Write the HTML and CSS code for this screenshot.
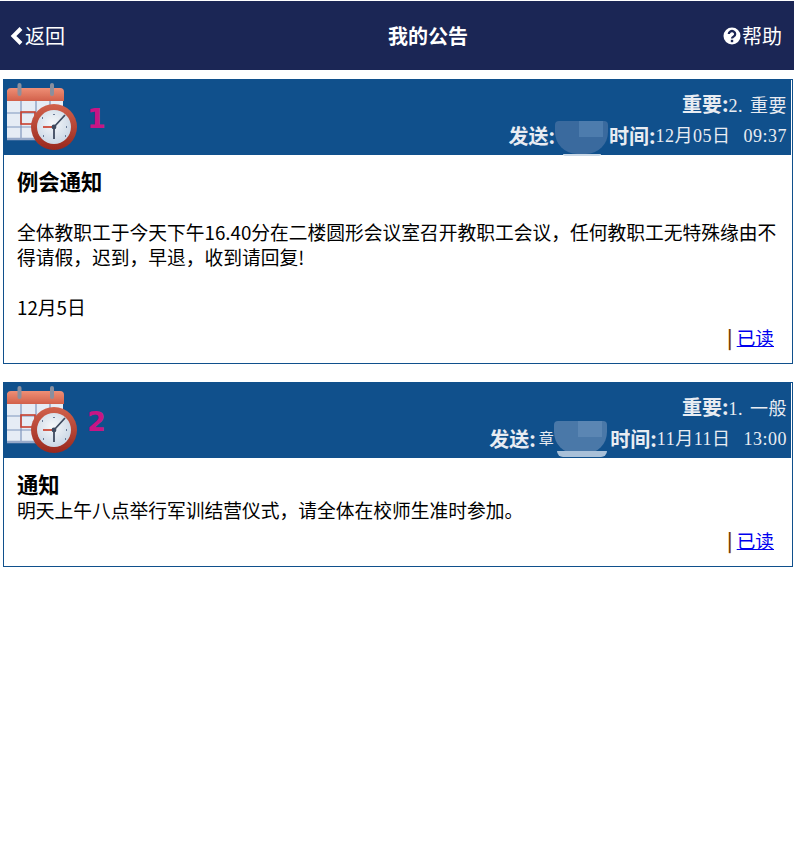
FILE: index.html
```html
<!DOCTYPE html>
<html lang="zh-CN">
<head>
    <meta charset="UTF-8">
    <meta name="viewport" content="width=device-width, initial-scale=1.0">
    <title>我的公告</title>
    <link rel="stylesheet" href="styles.css">
</head>
<body>
    <svg class="defs" width="0" height="0" aria-hidden="true">
        <defs>
            <linearGradient id="calTop" x1="0" y1="0" x2="0" y2="1">
                <stop offset="0" stop-color="#ee8f76"/>
                <stop offset="1" stop-color="#d2604a"/>
            </linearGradient>
            <radialGradient id="face" cx="0.45" cy="0.4" r="0.7">
                <stop offset="0" stop-color="#f6f8fa"/>
                <stop offset="1" stop-color="#c4d2e2"/>
            </radialGradient>
            <linearGradient id="rim" x1="0" y1="0" x2="0" y2="1">
                <stop offset="0" stop-color="#d2624c"/>
                <stop offset="1" stop-color="#99281e"/>
            </linearGradient>
            <filter id="soft"><feGaussianBlur stdDeviation="0.45"/></filter>
            <g id="calendar" filter="url(#soft)">
                <rect x="2" y="9" width="56" height="50" rx="2" fill="#e6ecf5"/>
                <path d="M2 32h56M2 46h56M16 20v38M31 20v38M45 20v38" stroke="#7f95bd" stroke-width="1.2" fill="none"/>
                <path d="M2 58h50" stroke="#97a9c9" stroke-width="2.5"/>
                <path d="M2 20V11a4 4 0 0 1 4-4h49a4 4 0 0 1 4 4v9z" fill="url(#calTop)"/>
                <rect x="16" y="31" width="14" height="12" fill="none" stroke="#c9402f" stroke-width="1.6"/>
                <rect x="12.500" y="2" width="4" height="13" rx="2" fill="#8a8f9e"/>
                <rect x="45" y="2" width="4" height="13" rx="2" fill="#8a8f9e"/>
                <circle cx="49" cy="46" r="23" fill="url(#rim)"/>
                <circle cx="49" cy="46" r="17" fill="url(#face)"/>
                <path d="M49 46L38 46" stroke="#cf4a38" stroke-width="1.8"/>
                <path d="M49 46L60 34M49 46v12" stroke="#3f4b5f" stroke-width="1.8"/>
                <circle cx="49" cy="46" r="2.4" fill="#3f4b5f"/>
                <path d="M49 33v1M62 46h-1M37 37h1M60 55h1M38 55h1" stroke="#6a7c98" stroke-width="2"/>
            </g>
        </defs>
    </svg>

    <header class="topbar">
        <a class="topbar-link">
            <svg class="icon" width="14" height="18" viewBox="0 0 14 18"><path d="M11 1.5L3.5 9l7.5 7.5" fill="none" stroke="#fff" stroke-width="4"/></svg>返回
        </a>
        <h1 class="topbar-title">我的公告</h1>
        <a class="topbar-link">
            <svg class="icon" width="18" height="18" viewBox="0 0 18 18">
                <circle cx="9" cy="9" r="8.5" fill="#fff"/>
                <path d="M5.8 7a3.2 3 0 1 1 4.8 2.6C9.500 10.300 9 10.600 9 11.500" fill="none" stroke="#1b2655" stroke-width="2.300"/>
                <rect x="7.800" y="12.800" width="2.400" height="2.400" fill="#1b2655"/>
            </svg>帮助
        </a>
    </header>

    <main class="notices">
        <section class="notice">
            <div class="notice-head">
                <svg class="cal" width="74" height="72" viewBox="0 0 74 72"><use href="#calendar"/></svg>
                <span class="notice-num">1</span>
                <div class="notice-meta">
                    <div><b>重要:</b><span class="val">2. 重要</span></div>
                    <div class="meta-row">
                        <b>发送:</b><span class="mask">
                            <i class="blob blob-a"></i><i class="blob blob-b"></i><i class="blob blob-c"></i>
                        </span><b>时间:</b><span class="val time">12月05日 09:37</span>
                    </div>
                </div>
            </div>
            <div class="notice-body">
                <h3>例会通知</h3>
                <br>
                <p>全体教职工于今天下午16.40分在二楼圆形会议室召开教职工会议，任何教职工无特殊缘由不得请假，迟到，早退，收到请回复!</p>
                <br>
                <p>12月5日</p>
            </div>
            <div class="notice-foot"><span class="sep">|</span> <a href="#">已读</a></div>
        </section>

        <section class="notice">
            <div class="notice-head">
                <svg class="cal" width="74" height="72" viewBox="0 0 74 72"><use href="#calendar"/></svg>
                <span class="notice-num">2</span>
                <div class="notice-meta">
                    <div><b>重要:</b><span class="val">1. 一般</span></div>
                    <div class="meta-row">
                        <b>发送:</b><span class="val small">章</span><span class="mask wide">
                            <i class="blob blob-a"></i><i class="blob blob-b"></i><i class="blob blob-c"></i>
                        </span><b>时间:</b><span class="val time">11月11日 13:00</span>
                    </div>
                </div>
            </div>
            <div class="notice-body">
                <h3>通知</h3>
                <p>明天上午八点举行军训结营仪式，请全体在校师生准时参加。</p>
            </div>
            <div class="notice-foot"><span class="sep">|</span> <a href="#">已读</a></div>
        </section>
    </main>
</body>
</html>
```

FILE: styles.css
```css
body{
    margin: 0;
    padding: 1px 1px 0 0;
    font-family: "Noto Sans CJK SC", "Liberation Sans", sans-serif;
    font-size: 18.67px;
    line-height: 25px;
    color: #000;
    background-color: #fff;
}

.defs{
    position: absolute;
}

.topbar{
    height: 69px;
    background-color: #1b2655;
    color: #fff;
    padding: 0 12px 0 10px;

    display: flex;
    justify-content: space-between;
    align-items: center;
}

.topbar-link{
    display: flex;
    align-items: center;
    font-size: 20px;
}

.topbar-title{
    margin: 0 0 0 68px;
    font-size: 20px;
    font-weight: bold;
}

.icon{
    margin-right: 1px;
}

.notices{
    padding: 9px 1px 0 3px;
}

.notice{
    border: 1px solid #10508c;
    margin-bottom: 18px;
}

.notice-head{
    height: 76px;
    margin: -1px 1px 0 -1px;
    padding-right: 4px;
    background-color: #10508c;
    color: #e8ecf2;

    display: flex;
    align-items: center;
}

.cal{
    flex: none;
    margin: 0 0 0 2px;
}

.notice-num{
    margin: 2px 0 0 8px;
    font-family: "DejaVu Sans", sans-serif;
    font-size: 27px;
    font-weight: bold;
    color: #c71585;
}

.notice-meta{
    margin-left: auto;
    padding-top: 5px;
    text-align: right;
    line-height: 30px;
}

.notice-meta b{
    font-size: 20px;
}

.meta-row{
    display: flex;
    justify-content: flex-end;
}

.val{
    font-family: "Liberation Serif", "Noto Sans CJK SC", serif;
    font-size: 18px;
    letter-spacing: 0.5px;
    word-spacing: 2px;
}

.val.time{
    word-spacing: 8px;
}

.val.small{
    font-size: 15px;
    margin-left: 3px;
}

.mask{
    display: inline-block;
    position: relative;
    width: 54px;
    height: 30px;
}

.mask.wide{
    width: 56px;
}

.blob{
    position: absolute;
    display: block;
}

.blob-a{
    left: 0;
    top: 0;
    width: 53px;
    height: 33px;
    border-radius: 4px 4px 22px 22px;
    background-color: #3a6a9e;
}

.blob-b{
    left: 24px;
    top: 0;
    width: 24px;
    height: 16px;
    background-color: #4d7cad;
}

.blob-c{
    left: 8px;
    top: 33px;
    width: 38px;
    height: 2px;
    border-radius: 0 0 18px 18px;
    background-color: #cad8e6;
}

.wide .blob-a{
    top: -3px;
    background-color: #4a78a8;
}

.wide .blob-b{
    top: -3px;
    background-color: #5b86b3;
}

.wide .blob-c{
    left: 3px;
    top: 27px;
    width: 50px;
    height: 6px;
    border-radius: 0 0 25px 25px;
    background-color: #a9c0d8;
}

.notice-body{
    padding: 12px 12px 0 13px;
}

.notice-body h3{
    margin: 0;
    font-size: 21.33px;
    line-height: 27px;
    font-weight: bold;
}

.notice-body p{
    margin: 0;
    font-size: 18.75px;
}

.notice-foot{
    text-align: right;
    padding: 5px 18px 14px 0;
}

.notice-foot .sep{
    color: #7a4300;
    font-weight: bold;
}

.notice-foot a{
    color: #0000ee;
}
```
